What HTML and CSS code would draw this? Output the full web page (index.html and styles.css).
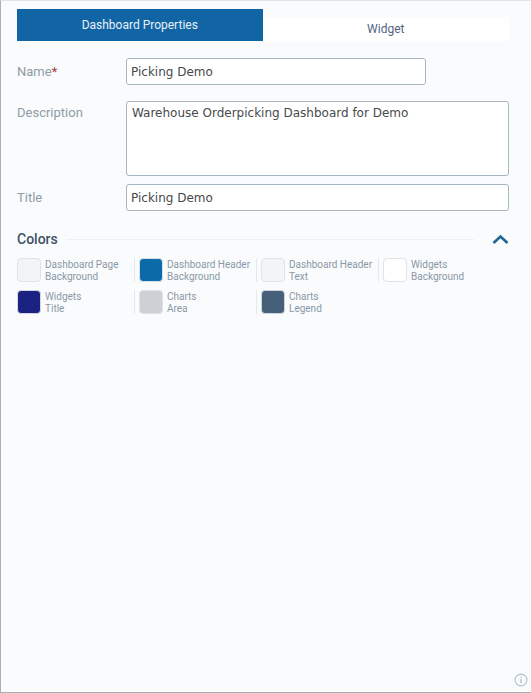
FILE: index.html
```html
<!DOCTYPE html>
<html lang="en">
<head>
<meta charset="utf-8">
<title>Dashboard Properties</title>
<link rel="stylesheet" href="styles.css">
</head>
<body>
<main class="panel">
  <nav class="tabs">
    <div class="tab tab-active">Dashboard Properties</div>
    <div class="tab tab-idle">Widget</div>
  </nav>
  <div class="field field-name">
    <label class="label">Name<span class="req">*</span></label>
    <div class="control control-short">Picking Demo</div>
  </div>
  <div class="field field-desc">
    <label class="label">Description</label>
    <div class="control control-area">Warehouse Orderpicking Dashboard for Demo</div>
  </div>
  <div class="field field-title">
    <label class="label">Title</label>
    <div class="control">Picking Demo</div>
  </div>
  <div class="section">
    <h2 class="section-title">Colors</h2>
    <span class="rule"></span>
    <svg class="chevron" width="18" height="10" viewBox="0 0 18 10"><path d="M2.5 9 L9.5 2.5 L16.5 9" fill="none" stroke="#1f6595" stroke-width="2.6"/></svg>
  </div>
  <div class="colors">
    <div class="color"><span class="swatch sw-page"></span><span class="names">Dashboard Page<br>Background</span></div>
    <div class="color"><span class="swatch sw-header"></span><span class="names">Dashboard Header<br>Background</span></div>
    <div class="color"><span class="swatch sw-page"></span><span class="names">Dashboard Header<br>Text</span></div>
    <div class="color"><span class="swatch sw-white"></span><span class="names">Widgets<br>Background</span></div>
    <div class="color"><span class="swatch sw-navy"></span><span class="names">Widgets<br>Title</span></div>
    <div class="color"><span class="swatch sw-area"></span><span class="names">Charts<br>Area</span></div>
    <div class="color"><span class="swatch sw-legend"></span><span class="names">Charts<br>Legend</span></div>
  </div>
  <svg class="info" width="14" height="14" viewBox="0 0 14 14"><circle cx="7" cy="7" r="5.9" fill="none" stroke="#a9c0cf" stroke-width="1.1"/><rect x="6.4" y="6" width="1.3" height="4.3" fill="#a9c0cf"/><rect x="6.4" y="3.6" width="1.3" height="1.3" fill="#a9c0cf"/></svg>
</main>
</body>
</html>
```
FILE: styles.css
```css
* { box-sizing: border-box; }
html, body { margin: 0; height: 100%; }
body { background: #f9fbfd; overflow: hidden; }
.panel {
  position: relative;
  width: 531px;
  height: 693px;
  padding: 8px 22px 0 16px;
  border-left: 1px solid #a9b0b5;
  border-top: 1px solid #dfe5ea;
  border-bottom: 1px solid #a9b0b5;
  font-family: Roboto, "Liberation Sans", sans-serif;
}
.tabs { display: flex; align-items: flex-end; height: 32px; }
.tab { text-align: center; font-size: 12px; }
.tab-active { width: 246px; height: 32px; line-height: 32px; background: #1265a5; color: #e6f1f8; }
.tab-idle { width: 247px; height: 24px; line-height: 25px; background: #fff; color: #51667f; }
.field { display: flex; align-items: flex-start; }
.field-name { margin-top: 17px; }
.field-desc { margin-top: 16px; }
.field-title { margin-top: 8px; }
.label {
  width: 109px;
  font-size: 13px;
  line-height: 27px;
  color: #8f9ca6;
  flex: none;
}
.field-desc .label { line-height: 24px; }
.req { color: #a83a3a; }
.control {
  flex: 1;
  height: 27px;
  padding: 1px 4px 0;
  background: #fff;
  border: 1px solid #a8b6bf;
  border-radius: 3px;
  font-family: "DejaVu Sans", sans-serif;
  font-size: 12px;
  line-height: 24px;
  color: #47494c;
  white-space: nowrap;
}
.control-short { flex: none; width: 300px; }
.control-area { height: 75px; padding: 0 5px; line-height: 23px; }
.section { display: flex; align-items: center; height: 20px; margin-top: 18px; }
.section-title { margin: 0; font-size: 14px; font-weight: 500; line-height: 20px; color: #3f5266; }
.rule { flex: 1; height: 1px; margin: 0 17px 0 8px; background: #eef1f4; }
.chevron { flex: none; }
.colors {
  display: grid;
  grid-template-columns: 117px 122px 122px 122px;
  grid-auto-rows: 24px;
  row-gap: 8px;
  margin-top: 9px;
}
.color { display: flex; gap: 4px; height: 24px; }
.color + .color { padding-left: 4px; border-left: 1px solid #e6e9ec; }
.color:nth-child(5) { padding-left: 0; border-left: 0; }
.swatch {
  flex: none;
  width: 24px;
  height: 24px;
  border-radius: 4px;
  border: 1px solid #dfe3e6;
}
.sw-page { background: #f2f4f6; }
.sw-white { background: #fff; }
.sw-header { background: #0a6ba8; border-color: #d6e2ea; }
.sw-navy { background: #1b2180; border-color: #d4d6e6; }
.sw-area { background: #cdd1d5; border-color: #dfe3e6; }
.sw-legend { background: #46607a; border-color: #cfd5da; }
.names { padding-top: 1px; font-size: 10px; line-height: 12px; color: #8a99a5; white-space: nowrap; }
.info { position: absolute; right: 3px; bottom: 5px; }
```
